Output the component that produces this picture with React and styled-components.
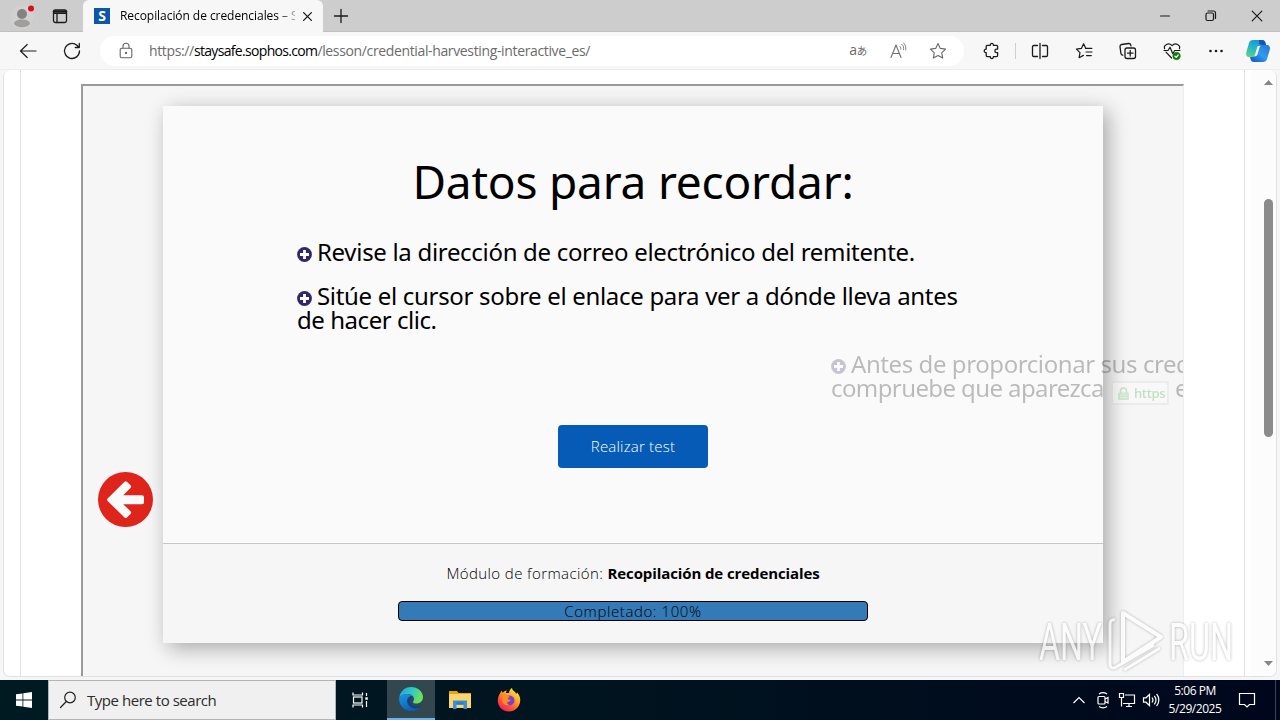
import React from "react";
import styled, { createGlobalStyle } from "styled-components";

const Global = createGlobalStyle`
  * { box-sizing: border-box; }
  html, body { margin: 0; padding: 0; overflow: hidden; }
  body { font-family: "Open Sans", "Noto Sans", sans-serif; color: #000; }
  svg { display: block; flex: none; }
`;

const Desktop = styled.div`
  width: 1280px;
  height: 720px;
  display: flex;
  flex-direction: column;
  overflow: hidden;
  position: relative;
`;

/* ---------- Browser chrome ---------- */
const TabStrip = styled.div`
  height: 32px;
  flex: none;
  display: flex;
  background: #cdcdcd;
  border-bottom: 1px solid #c0c0c0;
`;
const TabStripStart = styled.div`
  width: 83px;
  display: flex;
  align-items: center;
  gap: 15px;
  padding-left: 9px;
`;
const ActiveTab = styled.div`
  width: 240px;
  height: 32px;
  background: #f7f7f7;
  border-radius: 6px 6px 0 0;
  display: flex;
  align-items: center;
  padding: 0 9px 0 11px;
`;
const Favicon = styled.div`
  width: 16px;
  height: 16px;
  background: #0b57a8;
  color: #fff;
  font: 700 14px/16px "Open Sans", sans-serif;
  text-align: center;
`;
const TabTitle = styled.div`
  width: 175px;
  margin: 0 6px 0 10px;
  overflow: hidden;
  white-space: nowrap;
  font-size: 12px;
  line-height: 16px;
  letter-spacing: -0.06px;
  mask-image: linear-gradient(90deg, #000 158px, transparent 182px);
`;
const IconSlot = styled.div`
  width: ${(p) => p.$w}px;
  height: ${(p) => p.$h || 31}px;
  flex: none;
  display: flex;
  align-items: center;
  justify-content: center;
`;
const WindowButtons = styled.div`
  display: flex;
  margin-left: auto;
`;
const Toolbar = styled.div`
  height: 38px;
  flex: none;
  display: flex;
  align-items: center;
  padding-left: 6px;
  background: #f7f7f7;
  border-bottom: 1px solid #ededed;
`;
const AddressBar = styled.div`
  width: 864px;
  height: 30px;
  margin: 0 6px 0 6px;
  border-radius: 15px;
  background: #fff;
  display: flex;
  align-items: center;
  padding: 0 6px 0 6px;
`;
const Url = styled.div`
  flex: 1;
  margin-left: 3px;
  font-size: 14px;
  line-height: 20px;
  color: #6b6b6b;
  white-space: nowrap;
  letter-spacing: -0.36px;
  b { font-weight: 400; color: #000; letter-spacing: -0.67px; }
`;
const Divider = styled.div`
  width: 1px;
  height: 16px;
  margin: 0 1px 0 2px;
  background: #cfcfcf;
`;

/* ---------- Page ---------- */
const Window = styled.div`
  height: 610px;
  flex: none;
  background: #f6f6f8;
  padding: 0 3px 3px 3px;
`;
const Page = styled.div`
  height: 607px;
  background: #fff;
  border: 1px solid #e2e2e4;
  border-top: 0;
  border-radius: 7px;
  display: flex;
  overflow: hidden;
`;
const Gutter = styled.div`
  width: 17px;
  border-right: 1px solid #dedede;
`;
const Main = styled.div`
  width: 1224px;
  padding: 14px 0 0 60px;
  border-right: 1px solid #dedede;
`;
const ScrollTrack = styled.div`
  flex: 1;
  display: flex;
  flex-direction: column;
  align-items: center;
  padding: 10px 1px 10px 16px;
  background: linear-gradient(90deg, #fff 5px, #fcfcfc 6px);
`;
const Thumb = styled.div`
  width: 9px;
  height: 238px;
  margin: 114px 0 auto;
  border-radius: 5px;
  background: #8b8b8b;
`;
const Frame = styled.div`
  width: 1103px;
  height: 700px;
  border: 2px solid #eeeeee;
  border-top-color: #9a9a9a;
  border-left-color: #9a9a9a;
  border-right-width: 1px;
  background: #f6f6f6;
  display: flex;
  align-items: flex-start;
  overflow: hidden;
  font-family: "Noto Sans", sans-serif;
`;
const PrevButton = styled.div`
  width: 55px;
  height: 55px;
  flex: none;
  margin: 386px 10px 0 15px;
`;
const Slide = styled.div`
  width: 940px;
  height: 537px;
  flex: none;
  margin-top: 20px;
  background: #fafafa;
  box-shadow: 5px 5px 20px rgba(0, 0, 0, 0.32);
  display: flex;
  flex-direction: column;
`;
const SlideBody = styled.div`
  height: 437px;
  padding: 45px 0 0 134px;
`;
const Title = styled.h1`
  margin: 0 134px 29px 0;
  text-align: center;
  white-space: nowrap;
  font-weight: 400;
  font-size: 46px;
  line-height: 60px;
  letter-spacing: -0.2px;
`;
const Facts = styled.div`
  display: flex;
  flex-direction: column;
  gap: 20px;
`;
const Fact = styled.div`
  font-size: 24px;
  line-height: 24px;
  white-space: nowrap;
  opacity: ${(p) => (p.$entering ? 0.25 : 1)};
  transform: translateX(${(p) => (p.$entering ? 534 : 0)}px);
`;
const Line = styled.div`
  height: 24px;
  display: flex;
  align-items: center;
  letter-spacing: ${(p) => p.$spacing || "-0.31px"};
`;
const Bullet = styled.span`
  margin: 5px 5px 0 0;
`;
const HttpsBadge = styled.span`
  height: 24px;
  width: 58px;
  margin: 10px 6px 0 7px;
  padding-left: 5px;
  border: 2px solid #d0d0d0;
  background: #fff;
  color: #30a030;
  display: flex;
  align-items: center;
  gap: 5px;
  font: 600 13px/20px "Open Sans", sans-serif;
  letter-spacing: -0.3px;
`;
const TestButton = styled.div`
  width: 150px;
  height: 43px;
  margin: 25px 0 0 261px;
  border-radius: 4px;
  background: #055bb5;
  color: #fff;
  text-align: center;
  font: 300 15px/43px "Open Sans", sans-serif;
  letter-spacing: 0.2px;
`;
const SlideFooter = styled.div`
  height: 100px;
  border-top: 1px solid #c6c6c6;
  background: #f6f6f6;
  display: flex;
  flex-direction: column;
  align-items: center;
  padding-top: 18px;
`;
const ModuleName = styled.div`
  font: 300 15px/22px "Open Sans", sans-serif;
  white-space: nowrap;
  letter-spacing: 0.4px;
  b { font-weight: 700; letter-spacing: -0.1px; }
`;
const Progress = styled.div`
  width: 470px;
  height: 20px;
  margin-top: 17px;
  border: 1px solid #000;
  border-radius: 4px;
  background: #337ab7;
  text-align: center;
  font: 300 15px/19px "Open Sans", sans-serif;
  letter-spacing: 0.6px;
`;

/* ---------- Watermark ---------- */
const Watermark = styled.div`
  position: absolute;
  left: 1036px;
  top: 606px;
  opacity: 0.7;
  filter: drop-shadow(0 0 1.5px rgba(0, 0, 0, 0.4));
`;

/* ---------- Taskbar ---------- */
const Taskbar = styled.div`
  height: 40px;
  flex: none;
  display: flex;
  background: linear-gradient(90deg, #001a22 0, #00141f 45%, #00071d 100%);
`;
const Search = styled.div`
  width: 288px;
  height: 40px;
  border: 1px solid #b4b4b4;
  background: #f0f0f0;
  display: flex;
  align-items: center;
  gap: 9px;
  padding-left: 9px;
  font-size: 15px;
  letter-spacing: -0.46px;
  color: #2b2b2b;
`;
const AppSlot = styled.div`
  width: ${(p) => p.$w || 49}px;
  margin-right: ${(p) => p.$after || 0}px;
  height: 40px;
  display: flex;
  align-items: center;
  justify-content: center;
  background: ${(p) => (p.$active ? "#33474f" : "transparent")};
  border-bottom: ${(p) => (p.$active ? "2px solid #76b0e0" : "0")};
`;
const Tray = styled.div`
  margin-left: auto;
  display: flex;
  align-items: center;
`;
const Clock = styled.div`
  width: 64px;
  color: #fff;
  font-size: 12px;
  line-height: 18px;
  text-align: center;
  letter-spacing: -0.45px;
`;
const ShowDesktop = styled.div`
  width: 5px;
  height: 40px;
  margin-left: 8px;
  border-left: 1px solid #3c4558;
`;

/* ---------- Icons ---------- */
const Stroke = ({ size = 20, color = "#1b1b1b", width = 1.2, children }) => (
  <svg width={size} height={size} viewBox="0 0 20 20" fill="none" stroke={color} strokeWidth={width} strokeLinecap="round" strokeLinejoin="round">
    {children}
  </svg>
);

const ProfileIcon = () => (
  <svg width="26" height="30" viewBox="0 0 26 30">
    <circle cx="13" cy="16" r="11.500" fill="#d3d1d0" />
    <circle cx="13" cy="13" r="5" fill="#858382" />
    <path d="M5 23c0-3 3-4.500 8-4.500s8 1.500 8 4.500c-2 2.500-5 3.200-8 3.200S7 25.500 5 23z" fill="#a09e9d" />
    <circle cx="22" cy="7.500" r="3" fill="#e00b1c" />
  </svg>
);
const WorkspacesIcon = () => (
  <Stroke width={1.3} size={20}>
    <rect x="3.500" y="4" width="13" height="12.500" rx="1.800" />
    <path d="M3.500 7.300h13M7 7.500v9" />
    <path d="M4 5.600h12" strokeWidth="2.400" />
  </Stroke>
);
const BackIcon = () => <Stroke><path d="M18 10H2.500M9.200 3.500L2.500 10l6.700 6.500" /></Stroke>;
const RefreshIcon = () => <Stroke width={1.3}><path d="M17.500 10a7.500 7.500 0 1 1-2.600-5.700L17 6.300M17.300 2.500v4h-4" /></Stroke>;
const LockIcon = () => (
  <Stroke color="#666" width={1.1}>
    <rect x="4.200" y="7.200" width="11.600" height="9.600" rx="1.600" />
    <path d="M7 7V5.200a3 3 0 0 1 6 0V7" />
    <circle cx="10" cy="12" r=".6" fill="#666" />
  </Stroke>
);
const TranslateGlyph = styled.span`
  color: #6a6a6a;
  font: 400 14px/16px "Open Sans", "Noto Sans CJK JP", sans-serif;
  letter-spacing: -0.3px;
  small { font-size: 10.500px; }
`;
const ReadAloudIcon = () => (
  <Stroke color="#707070" width={1.1}>
    <path d="M3 16.500L8 4l5 12.500M4.600 12.500h6.800" />
    <path d="M12 5.500c.8.800 1 1.800.8 2.800M13.800 3.300c1.700 1.500 2.200 3.500 1.700 5.400M15.700 2c1.900 2 2.500 4.500 2 7" strokeWidth=".9" />
  </Stroke>
);
const StarPath = "M10 2.500l2.300 4.900 5.300.7-3.900 3.700 1 5.300L10 14.500l-4.700 2.600 1-5.300-3.900-3.700 5.300-.7z";
const StarIcon = () => <Stroke color="#6a6a6a" width={1.1}><path d={StarPath} /></Stroke>;
const PuzzleIcon = () => (
  <Stroke width={1.3}>
    <path d="M5.200 4.300h3.100c-.3-2.600 3.400-2.600 3.100 0h3.200c.6 0 1 .4 1 1v2.900h-1c-2.300 0-2.300 3.400 0 3.400h1v3c0 .6-.4 1-1 1h-3.200c.3 2.600-3.400 2.600-3.100 0H5.200c-.6 0-1-.4-1-1v-3c-2.600.3-2.600-3.700 0-3.400V5.300c0-.6.400-1 1-1z" />
  </Stroke>
);
const SplitIcon = () => (
  <Stroke width={1.3}>
    <path d="M7.500 4.500H3.800c-.8 0-1.300.5-1.300 1.300v8.400c0 .8.500 1.300 1.300 1.300H7.500M12.500 4.500h3.700c.8 0 1.300.5 1.300 1.300v8.400c0 .8-.5 1.300-1.300 1.300H12.500M10 2.500v15" />
  </Stroke>
);
const FavoritesIcon = () => (
  <Stroke width={1.2}>
    <path d="M11.500 6.800L9.600 2.800 7.400 7.400l-5 .7L6 11.700l-.9 5 4.300-2.300M14 7.400h3.800M11.500 7.400h2.500M12 11h6M12.500 14.600h4.800" />
  </Stroke>
);
const CollectionsIcon = () => (
  <Stroke width={1.3}>
    <rect x="7" y="7" width="10.500" height="10.500" rx="2" />
    <path d="M12.200 9.500v5.500M9.500 12.200h5.500M4.800 14.200c-1.100-.2-1.700-.9-1.900-1.900L2 5.700c-.1-1.100.5-2 1.600-2.200l7-1c1.100-.1 2 .5 2.200 1.600l.2.800" />
  </Stroke>
);
const HealthIcon = () => (
  <Stroke width={1.2}>
    <path d="M2.600 7.800C1.300 4 6.500 1 10 4.600c3.500-3.600 8.800-.6 7.400 3.200M4 11.200l5.600 5.800M2 9.500h4L8 6.300l2.800 6.500 1.900-3.300H18" />
    <circle cx="14.500" cy="15" r="3.700" fill="#107c10" stroke="#107c10" strokeWidth=".6" />
    <path d="M13 15.200l1.200 1.100 2-2.300" stroke="#fff" />
  </Stroke>
);
const DotsIcon = () => (
  <svg width="20" height="20" fill="#1b1b1b"><circle cx="4.500" cy="10" r="1.300" /><circle cx="10" cy="10" r="1.300" /><circle cx="15.500" cy="10" r="1.300" /></svg>
);
const CopilotIcon = () => (
  <svg width="26" height="26" viewBox="0 0 26 26">
    <defs>
      <linearGradient id="cpA" x1=".7" y1="0" x2=".3" y2="1"><stop offset="0" stopColor="#1a90dd" /><stop offset=".5" stopColor="#22b8c8" /><stop offset="1" stopColor="#5bd08b" /></linearGradient>
      <linearGradient id="cpB" x1="1" y1="0" x2="0" y2="1"><stop offset="0" stopColor="#2a6fd8" /><stop offset=".5" stopColor="#2f9cf0" /><stop offset="1" stopColor="#1749c5" /></linearGradient>
    </defs>
    <path d="M8 2h9c2 0 3 1.200 3.500 3L21 7h-3c-2 0-2.800 1-3.500 3l-2.300 7c-.6 1.500-1.500 2-3 2H4.500C1.500 19 .6 17 1.400 14L4 5c.6-2 2-3 4-3z" fill="url(#cpA)" />
    <path d="M14 2h3c2 0 3 1.200 3.500 3L21 7h-4c-2 0-3-.8-3-3z" fill="#1456c0" />
    <path d="M18 24H9c-2 0-3-1.200-3.500-3L5 19h3.500c2 0 3-1 3.500-2.800L14.300 9c.5-1.400 1.300-2 3-2h4.200c3 0 4 2 3.200 5L22 21c-.6 2-2 3-4 3z" fill="url(#cpB)" />
    <path d="M13 8h2.600c-.7.500-.9 1-1.200 2l-2 6.500c-.3.900-.7 1.300-1.400 1.500H8.800c.8-.4 1-.9 1.300-1.800L12 10c.2-.9.500-1.600 1-2z" fill="#f7f7f7" />
  </svg>
);
const PlusBullet = () => (
  <svg width="15" height="15" viewBox="0 0 15 15">
    <circle cx="7.500" cy="7.500" r="7.400" fill="#2f2868" />
    <path d="M7.500 3v9M3 7.500h9" stroke="#fff" strokeWidth="2.800" />
  </svg>
);
const PrevIcon = () => (
  <svg width="55" height="55" viewBox="0 0 55 55">
    <circle cx="27.500" cy="27.500" r="27.500" fill="#df241c" />
    <path d="M26.500 9.800q1.200-1.100 2.400 0l3.600 3.400q1.300 1.400 0 2.700l-7.300 7.300H44q2 0 2 2v5q0 2-2 2H25.200l7.300 7q1.300 1.300 0 2.700l-3.600 3.500q-1.200 1.100-2.400 0L9.600 28.900q-1.100-1.200 0-2.400z" fill="#fafafa" />
  </svg>
);
const Arrow = ({ down }) => (
  <svg width="9" height="5" viewBox="0 0 9 5"><path d={down ? "M0 0h9L4.500 5z" : "M0 5h9L4.500 0z"} fill="#868686" /></svg>
);
const GreenLock = () => (
  <svg width="11" height="13" viewBox="0 0 11 13"><rect y="5.500" width="11" height="7.500" rx="1" fill="#6fc073" /><path d="M2 8h7M2 10.500h7" stroke="#b5e0b7" /><path d="M2.500 6V4a3 3 0 0 1 6 0v2" fill="none" stroke="#4caf50" strokeWidth="1.500" /></svg>
);
const WindowsLogo = () => (
  <svg width="16" height="16" viewBox="0 0 16 16" fill="#fff"><path d="M0 2.300l6.500-.9v6.200H0zM7.300 1.300L16 0v7.600H7.300zM0 8.400h6.500v6.200L0 13.700zM7.300 8.400H16V16l-8.700-1.300z" /></svg>
);
const TaskViewIcon = () => (
  <svg width="18" height="18" viewBox="0 0 18 18" fill="none" stroke="#fff" strokeWidth="1.200">
    <path d="M2 1.500v2.500h9.500V1.500M2 16.500V14h9.500v2.500M15.500 2v3M15.500 10v6" /><rect x="2.500" y="6" width="8.500" height="6" /><path d="M14.300 7.500h2.500" strokeWidth="2.400" />
  </svg>
);
const EdgeIcon = () => (
  <svg width="24" height="24" viewBox="0 0 24 24">
    <defs>
      <linearGradient id="edA" x1="0" y1="0" x2="1" y2=".3"><stop offset="0" stopColor="#249fe0" /><stop offset=".55" stopColor="#30c7c8" /><stop offset="1" stopColor="#6be25a" /></linearGradient>
      <linearGradient id="edB" x1="0" y1="0" x2=".6" y2="1"><stop offset="0" stopColor="#1797e3" /><stop offset="1" stopColor="#0b5db5" /></linearGradient>
    </defs>
    <path d="M.2 11C1 4.500 5.800 0 12 0c6.800 0 12 4.700 12 10 0 4-3 6.500-6.500 6.500-2.500 0-4-1-3.500-1.800.7-1 1-1.700 1-2.700 0-3-3-5-6.800-5C4.800 7 1.700 8.500.2 11z" fill="url(#edA)" />
    <path d="M.2 11C1.700 8.500 4.800 7 8.200 7c2.500 0 4.500.9 5.700 2.300C10 8.600 8 11.500 8 14c0 4.500 4 7.500 8.500 7.500 2.300 0 4.200-.7 5.600-1.700C20 22.500 16.300 24 12 24 5 24-.6 18 .2 11z" fill="url(#edB)" />
    <path d="M11.500 9.300C8.500 11 8 15 10 18c2.800 4 8.500 4.300 12.100 1.800.6-.5.200-1.200-.5-.9-4.500 1.800-9.600-.4-10.300-4.400-.2-1.700.4-3.300 2-4.900z" fill="#12408f" />
  </svg>
);
const FolderIcon = () => (
  <svg width="22" height="20" viewBox="0 0 22 20">
    <path d="M0 1h8l1.500 2H22v15H0z" fill="#e8a317" /><path d="M0 4h22v14H0z" fill="#fad66c" />
    <path d="M4 19v-8.500h14V19h-3.500v-4h-7v4z" fill="#3a8fd6" /><path d="M7.500 12.500h7v1h-7z" fill="#1d6db8" />
  </svg>
);
const FirefoxIcon = () => (
  <svg width="24" height="24" viewBox="0 0 24 24">
    <defs><linearGradient id="ff" x1=".9" y1="0" x2=".2" y2="1"><stop offset="0" stopColor="#fff34a" /><stop offset=".35" stopColor="#ffb02a" /><stop offset=".7" stopColor="#ff5433" /><stop offset="1" stopColor="#e81a69" /></linearGradient></defs>
    <path d="M3 5.500C3.300 4.500 4 3.300 4.800 2.500c.1 1 .4 1.800 1 2.300C7 3.200 8.600 2.600 10 2.500 9.300 3.300 9 4 9 5h3c.3-2.500 1.300-4 3-5 .3 2 1.300 2.700 3 4 .5.500 1 1.200 1.300 2l.8-1.400C22.500 7 23.500 10 23.200 13 22.600 19 18 23.500 12 23.500S.8 19 .8 12.700C.8 10 1.600 7.500 3 5.500z" fill="url(#ff)" />
    <circle cx="12.500" cy="12.500" r="5" fill="#7a3fd0" />
    <path d="M5.500 7.500c3.500-1 6 .2 7.500 1.500-1.500.3-2 1-2 1.800 0 1 2 .8 2.800 1-.6 1.900-2.300 1.700-3.300 2.400-.8.700-.2 2.200 1.800 2.600-4 1.200-7-1-7.300-4.300z" fill="#ff8a1f" />
  </svg>
);
const TrayIcon = ({ children }) => (
  <svg width="18" height="18" viewBox="0 0 18 18" fill="none" stroke="#fff" strokeWidth="1.200">{children}</svg>
);

export default function App() {
  return (
    <Desktop>
      <Global />
      <TabStrip>
        <TabStripStart>
          <ProfileIcon />
          <WorkspacesIcon />
        </TabStripStart>
        <ActiveTab>
          <Favicon>S</Favicon>
          <TabTitle>Recopilación de credenciales – Sophos</TabTitle>
          <Stroke size={13} width={2}><path d="M4 4l12 12M16 4L4 16" /></Stroke>
        </ActiveTab>
        <IconSlot $w={35}><Stroke size={20} width={1.3}><path d="M10 3.500v13M3.500 10h13" /></Stroke></IconSlot>
        <WindowButtons>
          <IconSlot $w={46}><Stroke><path d="M5.500 10h9" /></Stroke></IconSlot>
          <IconSlot $w={46}><Stroke><rect x="5" y="7" width="7.500" height="7.500" rx="1.500" /><path d="M7 5h5.500c1.300 0 2 .7 2 2v5.500" /></Stroke></IconSlot>
          <IconSlot $w={46}><Stroke><path d="M5.200 5.200l9.600 9.600M14.800 5.200l-9.600 9.600" /></Stroke></IconSlot>
        </WindowButtons>
      </TabStrip>
      <Toolbar>
        <IconSlot $w={44}><BackIcon /></IconSlot>
        <IconSlot $w={44}><RefreshIcon /></IconSlot>
        <AddressBar>
          <IconSlot $w={40} $h={30}><LockIcon /></IconSlot>
          <Url>https://<b>staysafe.sophos.com</b>/lesson/credential-harvesting-interactive_es/</Url>
          <IconSlot $w={40} $h={30}><TranslateGlyph>a<small>あ</small></TranslateGlyph></IconSlot>
          <IconSlot $w={40} $h={30}><ReadAloudIcon /></IconSlot>
          <IconSlot $w={40} $h={30}><StarIcon /></IconSlot>
        </AddressBar>
        <IconSlot $w={43}><PuzzleIcon /></IconSlot>
        <Divider />
        <IconSlot $w={45}><SplitIcon /></IconSlot>
        <IconSlot $w={44}><FavoritesIcon /></IconSlot>
        <IconSlot $w={44}><CollectionsIcon /></IconSlot>
        <IconSlot $w={44}><HealthIcon /></IconSlot>
        <IconSlot $w={44}><DotsIcon /></IconSlot>
        <IconSlot $w={40}><CopilotIcon /></IconSlot>
      </Toolbar>

      <Window>
        <Page>
          <Gutter />
          <Main>
            <Frame>
              <PrevButton><PrevIcon /></PrevButton>
              <Slide>
                <SlideBody>
                  <Title>Datos para recordar:</Title>
                  <Facts>
                    <Fact>
                      <Line><Bullet><PlusBullet /></Bullet>Revise la dirección de correo electrónico del remitente.</Line>
                    </Fact>
                    <Fact>
                      <Line><Bullet><PlusBullet /></Bullet>Sitúe el cursor sobre el enlace para ver a dónde lleva antes</Line>
                      <Line $spacing="-0.45px">de hacer clic.</Line>
                    </Fact>
                    <Fact $entering>
                      <Line $spacing="-0.42px"><Bullet><PlusBullet /></Bullet>Antes de proporcionar sus credenciales,</Line>
                      <Line $spacing="-0.6px">compruebe que aparezca <HttpsBadge><GreenLock />https</HttpsBadge> en</Line>
                    </Fact>
                  </Facts>
                  <TestButton>Realizar test</TestButton>
                </SlideBody>
                <SlideFooter>
                  <ModuleName>Módulo de formación: <b>Recopilación de credenciales</b></ModuleName>
                  <Progress>Completado: 100%</Progress>
                </SlideFooter>
              </Slide>
            </Frame>
          </Main>
          <ScrollTrack>
            <Arrow />
            <Thumb />
            <Arrow down />
          </ScrollTrack>
        </Page>
      </Window>

      <Taskbar>
        <AppSlot $w={48}><WindowsLogo /></AppSlot>
        <Search>
          <Stroke size={20} color="#222"><circle cx="12" cy="7.500" r="5.300" /><path d="M8.300 11.500L2.500 17.500" /></Stroke>
          Type here to search
        </Search>
        <AppSlot $w={47} $after={4}><TaskViewIcon /></AppSlot>
        <AppSlot $w={48} $active><EdgeIcon /></AppSlot>
        <AppSlot><FolderIcon /></AppSlot>
        <AppSlot><FirefoxIcon /></AppSlot>
        <Tray>
          <IconSlot $w={24}><TrayIcon><path d="M3.500 12L9 6.500l5.500 5.500" /></TrayIcon></IconSlot>
          <IconSlot $w={24}><TrayIcon><rect x="4" y="5.500" width="7" height="7.500" rx="1" /><path d="M11 8l3-1.500v5.500l-3-1.500M5 3c2.500-1.600 5.500-1.600 8 0M5 15.500c2.500 1.600 5.500 1.600 8 0" /></TrayIcon></IconSlot>
          <IconSlot $w={24}><TrayIcon><path d="M7 4h9.500v8.500H5M8 15.500h6M11 12.500v3M1.500 2.500h4v4h-4zM3.500 6.500v9" /></TrayIcon></IconSlot>
          <IconSlot $w={24}><TrayIcon><path d="M1.500 6.800h2.500L7.500 3.500v11L4 11.200H1.500zM10 6.500c1.200 1.500 1.200 3.500 0 5M12.300 4.800c2 2.500 2 6 0 8.500M14.600 3c3 3.600 3 8.500 0 12" /></TrayIcon></IconSlot>
          <Clock>5:06 PM<br />5/29/2025</Clock>
          <IconSlot $w={40}><TrayIcon><path d="M1.500 2.500h15v11h-5L9 16l-2.500-2.500h-5z" /></TrayIcon></IconSlot>
          <ShowDesktop />
        </Tray>
      </Taskbar>

      <Watermark>
        <svg width="200" height="70" viewBox="0 0 200 70" fill="#fff" fontFamily="Roboto, sans-serif" fontSize="52">
          <text x="3" y="54" textLength="63" lengthAdjust="spacingAndGlyphs">ANY</text>
          <text x="133" y="54" textLength="64" lengthAdjust="spacingAndGlyphs">RUN</text>
          <g fill="none" stroke="#fff" strokeWidth="4" strokeLinejoin="round">
            <path d="M87 7l38 24-38 25z" />
            <path d="M79 14c-3-1-5 1-5 4v40c0 4 3 5 6 3M80 61l38-22M88 64l36-22" strokeWidth="3" />
          </g>
        </svg>
      </Watermark>
    </Desktop>
  );
}
